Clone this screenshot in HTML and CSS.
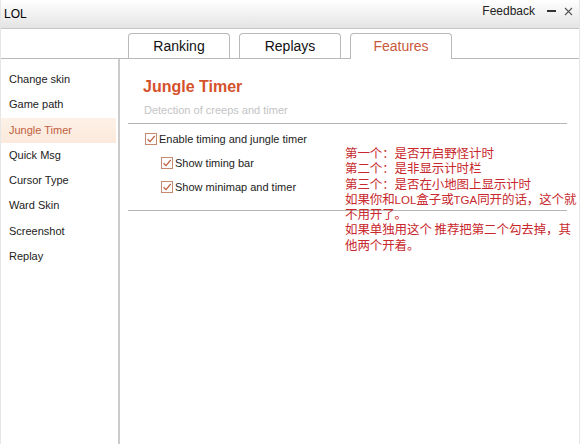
FILE: index.html
```html
<!DOCTYPE html>
<html lang="en">
<head>
  <meta charset="UTF-8" />
  <title>LOL</title>
  <link rel="stylesheet" href="styles.css">
</head>
<body>
  <div class="window">
    <div class="titlebar">
      <span class="title">LOL</span>
      <div class="title-actions">
        <span class="feedback">Feedback</span>
        <span class="min-btn"></span>
        <svg class="close-btn" width="9" height="9" viewBox="0 0 9 9">
          <path d="M1 1L8 8M8 1L1 8" stroke="#555" stroke-width="1.1" fill="none"/>
        </svg>
      </div>
    </div>

    <div class="tabs">
      <div class="tab">Ranking</div>
      <div class="tab">Replays</div>
      <div class="tab active">Features</div>
    </div>

    <div class="main">
      <ul class="sidebar">
        <li>Change skin</li>
        <li>Game path</li>
        <li class="selected">Jungle Timer</li>
        <li>Quick Msg</li>
        <li>Cursor Type</li>
        <li>Ward Skin</li>
        <li>Screenshot</li>
        <li>Replay</li>
      </ul>

      <div class="content">
        <div class="head">
          <h2>Jungle Timer</h2>
          <p class="subtitle">Detection of creeps and timer</p>
        </div>
        <div class="options">
          <label class="option">
            <span class="box"><svg width="10" height="10" viewBox="0 0 10 10"><path d="M1.5 5.2L4 7.6L8.7 2" /></svg></span>
            Enable timing and jungle timer
          </label>
          <label class="option sub">
            <span class="box"><svg width="10" height="10" viewBox="0 0 10 10"><path d="M1.5 5.2L4 7.6L8.7 2" /></svg></span>
            Show timing bar
          </label>
          <label class="option sub">
            <span class="box"><svg width="10" height="10" viewBox="0 0 10 10"><path d="M1.5 5.2L4 7.6L8.7 2" /></svg></span>
            Show minimap and timer
          </label>
        </div>
      </div>
    </div>

    <div class="note">
      <div>第一个：是否开启野怪计时</div>
      <div>第二个：是非显示计时栏</div>
      <div>第三个：是否在小地图上显示计时</div>
      <div>如果你和<span class="latin">LOL</span>盒子或<span class="latin">TGA</span>同开的话，这个就</div>
      <div>不用开了。</div>
      <div>如果单独用这个 推荐把第二个勾去掉，其</div>
      <div>他两个开着。</div>
    </div>
  </div>
</body>
</html>
```

FILE: styles.css
```css
body {
  margin: 0;
  padding: 0;
  font-family: "Liberation Sans", Arial, sans-serif;
  background-color: #fff;
  color: #111;
}

.window {
  position: relative;
  width: 580px;
  height: 444px;
  overflow: hidden;
  display: flex;
  flex-direction: column;
  box-sizing: border-box;
  border-left: 1px solid #e6e6e6;
  border-right: 1px solid #e6e6e6;
}

/* title bar */
.titlebar {
  height: 28px;
  flex: none;
  display: flex;
  justify-content: space-between;
  align-items: flex-start;
  padding: 0 6px 0 3px;
  background: linear-gradient(#ffffff, #f4f4f4 40%, #e4e4e4);
  border-bottom: 1px solid #c6c6c6;
}

.title {
  font-size: 12px;
  padding-top: 7px;
  color: #000;
}

.title-actions {
  display: flex;
  align-items: center;
  padding-top: 4px;
  height: 14px;
}

.feedback {
  font-size: 12px;
  color: #222;
  margin-right: 12px;
}

.min-btn {
  width: 9px;
  height: 2px;
  background-color: #333;
  margin-right: 8px;
}

/* tab strip */
.tabs {
  height: 29px;
  flex: none;
  display: flex;
  align-items: flex-end;
  gap: 9px;
  padding-left: 127px;
  border-bottom: 1px solid #b9b9b9;
}

.tab {
  width: 100px;
  height: 24px;
  border: 1px solid #b9b9b9;
  border-bottom: none;
  border-radius: 4px 4px 0 0;
  background-color: #fff;
  font-size: 14px;
  line-height: 24px;
  text-align: center;
  color: #111;
}

.tab.active {
  height: 25px;
  margin-bottom: -1px;
  color: #c85a3c;
}

/* body */
.main {
  flex: 1;
  display: flex;
}

.sidebar {
  list-style: none;
  margin: 0;
  padding: 8px 0 0 0;
  width: 117px;
  flex: none;
  border-right: 2px solid #cccccc;
}

.sidebar li {
  height: 25.3px;
  line-height: 25.3px;
  padding-left: 8px;
  font-size: 11px;
  color: #222;
}

.sidebar li.selected {
  margin-right: 2px;
  background: linear-gradient(#fdf1e7, #fbe9dc);
  color: #c0603c;
}

.content {
  flex: 1;
  padding: 0 12px 0 8px;
}

.head {
  padding: 18px 0 0 15px;
  border-bottom: 1px solid #b5b5b5;
}

.head h2 {
  margin: 0;
  font-size: 16px;
  line-height: 20px;
  color: #d4522b;
}

.subtitle {
  margin: 6px 0 6px 1px;
  font-size: 11px;
  line-height: 14px;
  color: #c4c4c4;
}

.options {
  padding: 3px 0 11px 17px;
  border-bottom: 1px solid #b5b5b5;
}

.option {
  height: 24px;
  display: flex;
  align-items: center;
  font-size: 11px;
  color: #222;
}

.option.sub {
  padding-left: 16px;
}

.box {
  width: 10px;
  height: 10px;
  border: 1px solid #c58a70;
  background-color: #fff;
  margin-right: 2px;
  display: flex;
}

.box path {
  fill: none;
  stroke: #c0603c;
  stroke-width: 1.2;
}

/* red annotation written over the panel */
.note {
  position: absolute;
  left: 344px;
  top: 145px;
  font-family: "Noto Sans CJK SC", sans-serif;
  font-size: 12.5px;
  line-height: 15.3px;
  color: #c8282d;
  white-space: nowrap;
  letter-spacing: -0.1px;
}

.note div {
  height: 15.3px;
}

.note .latin {
  font-family: "Liberation Sans", Arial, sans-serif;
  font-size: 11.5px;
  letter-spacing: 0;
}
```
